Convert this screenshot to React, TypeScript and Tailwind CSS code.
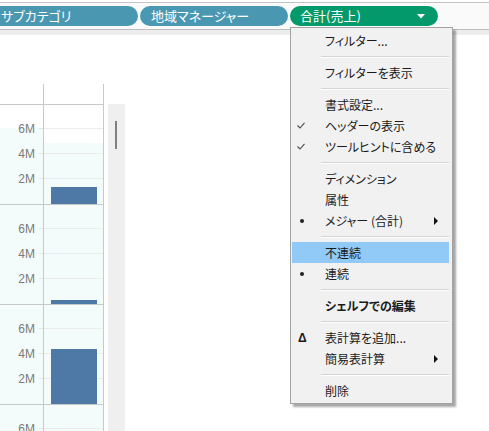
import React from 'react';

const jp = "font-['Noto_Sans_CJK_JP','Noto_Sans',sans-serif] [font-feature-settings:'palt']";

type Pane = { bar: number; axisWhite: number; chartWhite: number };

const panes: Pane[] = [
  { bar: 17, axisWhite: 23, chartWhite: 38 },
  { bar: 4, axisWhite: 0, chartWhite: 0 },
  { bar: 55, axisWhite: 0, chartWhite: 0 },
  { bar: 0, axisWhite: 0, chartWhite: 0 },
];

function Ticks() {
  return (
    <>
      <div className="absolute right-0 bottom-[25px] w-[4px] h-px bg-[#e6e6e6]" />
      <div className="absolute right-0 bottom-[50px] w-[4px] h-px bg-[#e6e6e6]" />
      <div className="absolute right-0 bottom-[75px] w-[4px] h-px bg-[#e6e6e6]" />
      <span className="absolute right-[8px] bottom-[18px] h-[14px] leading-[14px]">2M</span>
      <span className="absolute right-[8px] bottom-[43px] h-[14px] leading-[14px]">4M</span>
      <span className="absolute right-[8px] bottom-[68px] h-[14px] leading-[14px]">6M</span>
    </>
  );
}

function PaneRow({ pane }: { pane: Pane }) {
  return (
    <div className="flex h-[100px] border-b border-[#c8c8c8] shrink-0">
      <div className="relative w-[43px] bg-[#f4fcfb] font-['Liberation_Sans',sans-serif] text-[12px] text-[#7a7a7a]">
        <div className="bg-white" style={{ height: pane.axisWhite }} />
        <Ticks />
      </div>
      <div className="relative w-[61px] border-x border-[#c8c8c8] bg-[#f4fcfb]">
        <div className="bg-white" style={{ height: pane.chartWhite }} />
        <div className="absolute left-0 right-0 bottom-[25px] h-px bg-[#ececec]" />
        <div className="absolute left-0 right-0 bottom-[50px] h-px bg-[#ececec]" />
        <div className="absolute left-0 right-0 bottom-[75px] h-px bg-[#ececec]" />
        {pane.bar > 0 && (
          <div className="absolute bottom-0 left-[7px] w-[46px] bg-[#4e79a7]" style={{ height: pane.bar }} />
        )}
      </div>
    </div>
  );
}

type Item = { label: string; icon?: 'check' | 'dot' | 'delta'; sub?: boolean; bold?: boolean; active?: boolean } | 'sep';

const items: Item[] = [
  { label: 'フィルター...' },
  'sep',
  { label: 'フィルターを表示' },
  'sep',
  { label: '書式設定...' },
  { label: 'ヘッダーの表示', icon: 'check' },
  { label: 'ツールヒントに含める', icon: 'check' },
  'sep',
  { label: 'ディメンション' },
  { label: '属性' },
  { label: 'メジャー (合計)', icon: 'dot', sub: true },
  'sep',
  { label: '不連続', active: true },
  { label: '連続', icon: 'dot' },
  'sep',
  { label: 'シェルフでの編集', bold: true },
  'sep',
  { label: '表計算を追加...', icon: 'delta' },
  { label: '簡易表計算', sub: true },
  'sep',
  { label: '削除' },
];

function Icon({ kind }: { kind?: 'check' | 'dot' | 'delta' }) {
  if (kind === 'check')
    return (
      <svg width="8" height="7" viewBox="0 0 8 7" className="ml-[5px]">
        <path d="M0.5 3.5 L3 6 L7.5 0.8" fill="none" stroke="#4a4a4a" strokeWidth="1.1" />
      </svg>
    );
  if (kind === 'dot') return <span className="ml-[8px] w-[4px] h-[4px] rounded-full bg-[#222]" />;
  if (kind === 'delta')
    return <span className="ml-[6px] text-[12px] font-bold font-['Liberation_Sans',sans-serif]">Δ</span>;
  return null;
}

function Menu() {
  return (
    <div className={`absolute left-[290px] top-[27px] w-[163px] border border-[#a3a3a3] bg-[#f1f1f1] pt-[2px] pb-[2px] shadow-[3px_3px_2px_rgba(0,0,0,0.35)] text-[12px] text-[#1a1a1a] ${jp}`}>
      {items.map((it, i) =>
        it === 'sep' ? (
          <div key={i} className="h-[11px] flex flex-col justify-center ml-[30px] mr-[3px]">
            <div className="h-px bg-[#d4d4d4]" />
            <div className="h-px bg-white" />
          </div>
        ) : (
          <div
            key={i}
            className={`relative h-[21px] flex items-center ml-[1px] mr-[3px] ${it.active ? 'bg-[#91c9f7]' : ''}`}
          >
            <div className="w-[33px] h-full flex items-center shrink-0">
              <Icon kind={it.icon} />
            </div>
            <span className={`leading-[21px] whitespace-nowrap ${it.bold ? 'font-bold' : ''}`}>{it.label}</span>
            {it.sub && (
              <svg width="4" height="8" viewBox="0 0 4 8" className="absolute right-[11px] top-[7px]">
                <path d="M0 0 L4 4 L0 8 Z" fill="#111" />
              </svg>
            )}
          </div>
        )
      )}
    </div>
  );
}

export default function App() {
  return (
    <div className="relative w-[489px] h-[431px] overflow-hidden bg-white">
      <div className="h-[2px] bg-white" />
      {/* shelf */}
      <div className={`h-[27px] border-t border-[#c4c4c4] bg-[#fafafa] flex gap-[2px] pt-[3px] text-[13px] text-white ${jp}`}>
        <div className="ml-[-10px] w-[148px] h-[20px] rounded-full bg-[#4a97b2] pl-[11px] flex items-center shrink-0">
          サブカテゴリ
        </div>
        <div className="w-[148px] h-[20px] rounded-full bg-[#4a97b2] pl-[11px] flex items-center shrink-0">
          地域マネージャー
        </div>
        <div className="relative w-[148px] h-[20px] rounded-full bg-[#03996a] pl-[10px] flex items-center shrink-0">
          合計(売上)
          <svg width="8" height="5" viewBox="0 0 8 5" className="absolute right-[13px] top-[8px]">
            <path d="M0 0 L8 0 L4 4.5 Z" fill="#fff" />
          </svg>
        </div>
      </div>
      <div className="h-[6px] border-t border-[#bdbdbd] bg-[#ededed]" />

      {/* view */}
      <div className="flex">
        <div className="w-[104px] flex flex-col">
          <div className="h-[49px]" />
          <div className="flex h-[21px] border-b border-[#c8c8c8] shrink-0">
            <div className="w-[43px]" />
            <div className="w-[61px] border-x border-[#c8c8c8]" />
          </div>
          {panes.map((p, i) => (
            <PaneRow key={i} pane={p} />
          ))}
        </div>
        <div className="ml-[4px] mt-[69px] w-[17px] h-[330px] bg-[#efefef] pt-[17px] pl-[7px]">
          <div className="w-[2px] h-[28px] bg-[#808080]" />
        </div>
      </div>

      <Menu />
    </div>
  );
}
